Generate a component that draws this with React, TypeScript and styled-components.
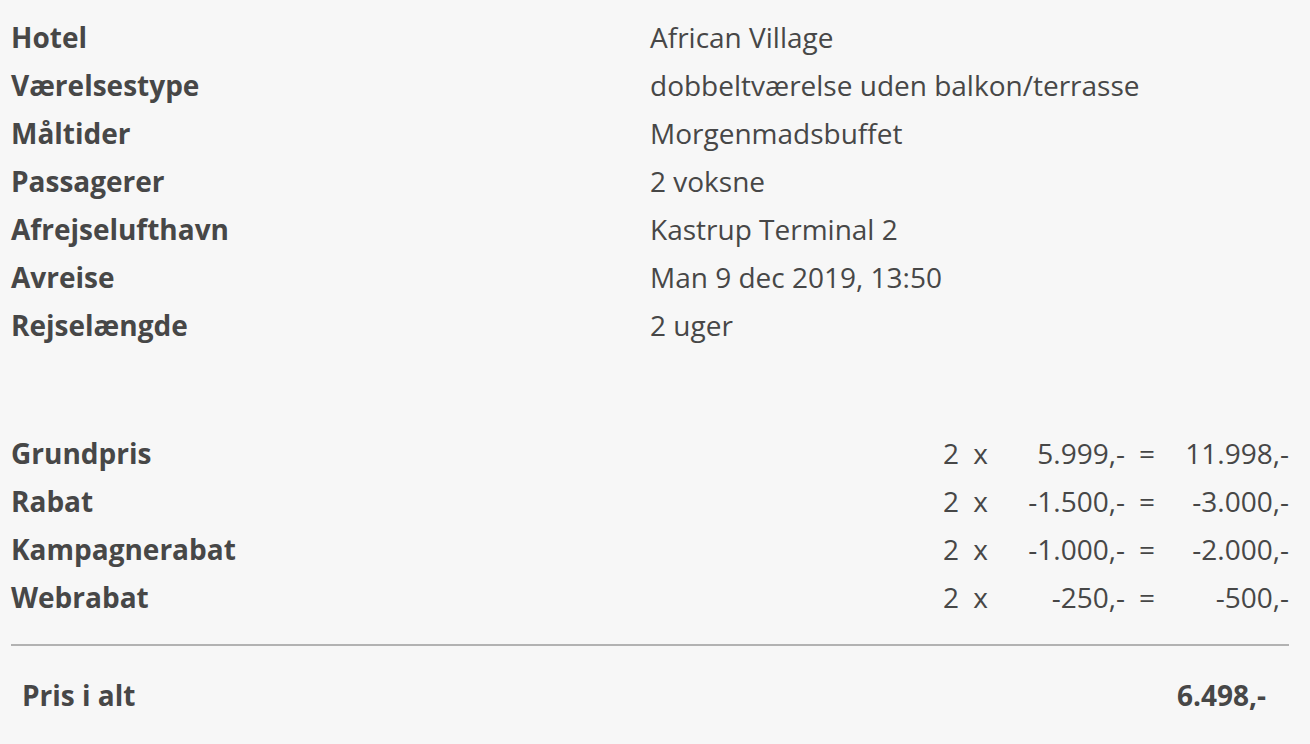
import { Fragment } from 'react'
import styled, { createGlobalStyle } from 'styled-components'

const GlobalStyle = createGlobalStyle`
  body {
    margin: 0;
    background: #f7f7f7;
    font-family: 'Open Sans', 'Noto Sans', sans-serif;
    color: #474747;
  }
`

const Page = styled.div`
  padding: 13px 21px 40px 11px;
`

const InfoGrid = styled.div`
  display: grid;
  grid-template-columns: 1fr 1fr;
  font-size: 28px;
  line-height: 48px;
`

const Label = styled.div`
  font-weight: 700;
  white-space: nowrap;
`

const Value = styled.div`
  white-space: nowrap;
`

const PriceGrid = styled.div`
  display: grid;
  grid-template-columns: 1fr 14px 31px 137px 30px 134px;
  margin-top: 80px;
  font-size: 28px;
  line-height: 48px;
`

const Cell = styled.div<{ $right?: boolean }>`
  white-space: nowrap;
  text-align: ${(p) => (p.$right ? 'right' : 'left')};
`

const Rule = styled.hr`
  border: 0;
  height: 2px;
  background: #b2b2b2;
  margin: 23px 0 0;
`

const TotalRow = styled.div`
  display: flex;
  justify-content: space-between;
  padding: 25px 23px 0 11px;
  font-size: 28px;
  line-height: 48px;
  font-weight: 700;
`

const info = [
  ['Hotel', 'African Village'],
  ['Værelsestype', 'dobbeltværelse uden balkon/terrasse'],
  ['Måltider', 'Morgenmadsbuffet'],
  ['Passagerer', '2 voksne'],
  ['Afrejselufthavn', 'Kastrup Terminal 2'],
  ['Avreise', 'Man 9 dec 2019, 13:50'],
  ['Rejselængde', '2 uger'],
]

const prices = [
  ['Grundpris', '5.999,-', '11.998,-'],
  ['Rabat', '-1.500,-', '-3.000,-'],
  ['Kampagnerabat', '-1.000,-', '-2.000,-'],
  ['Webrabat', '-250,-', '-500,-'],
]

export default function App() {
  return (
    <Page>
      <GlobalStyle />
      <InfoGrid>
        {info.map(([k, v]) => (
          <Fragment key={k}>
            <Label>{k}</Label>
            <Value>{v}</Value>
          </Fragment>
        ))}
      </InfoGrid>
      <PriceGrid>
        {prices.map(([k, each, sum]) => (
          <Fragment key={k}>
            <Label>{k}</Label>
            <Cell>2</Cell>
            <Cell $right>x</Cell>
            <Cell $right>{each}</Cell>
            <Cell $right>=</Cell>
            <Cell $right>{sum}</Cell>
          </Fragment>
        ))}
      </PriceGrid>
      <Rule />
      <TotalRow>
        <span>Pris i alt</span>
        <span>6.498,-</span>
      </TotalRow>
    </Page>
  )
}
